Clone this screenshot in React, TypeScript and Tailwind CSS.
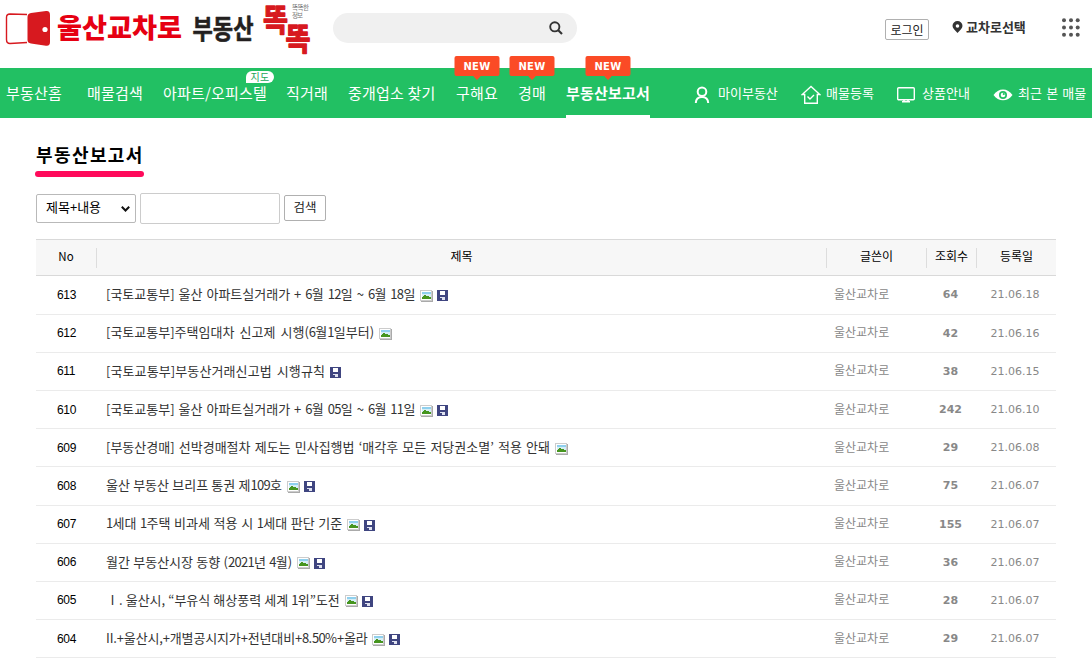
import clsx from "clsx";

const navLinks = [
  { title: "부동산홈", className: "w-[81px]" },
  { title: "매물검색", className: "w-[76px]" },
  { title: "아파트/오피스텔", className: "w-[123px]", badge: "map" },
  { title: "직거래", className: "w-[62px]" },
  { title: "중개업소 찾기", className: "w-[108px]" },
  { title: "구해요", className: "w-[62px]", badge: "new" },
  { title: "경매", className: "w-[48px]", badge: "new" },
  { title: "부동산보고서", className: "w-[84px]", badge: "new", active: true },
];

const posts = [
  { no: 613, title: "[국토교통부] 울산 아파트실거래가 + 6월 12일 ~ 6월 18일", image: true, file: true, hits: 64, date: "21.06.18", spacing: "w-[309px] [word-spacing:1.050px]" },
  { no: 612, title: "[국토교통부]주택임대차 신고제 시행(6월1일부터)", image: true, file: false, hits: 42, date: "21.06.16", spacing: "w-[268px] [word-spacing:2.200px]" },
  { no: 611, title: "[국토교통부]부동산거래신고법 시행규칙", image: false, file: true, hits: 38, date: "21.06.15", spacing: "w-[219px] tracking-[0.1px] [word-spacing:2px]" },
  { no: 610, title: "[국토교통부] 울산 아파트실거래가 + 6월 05일 ~ 6월 11일", image: true, file: true, hits: 242, date: "21.06.10", spacing: "w-[309px] [word-spacing:1.050px]" },
  { no: 609, title: "[부동산경매] 선박경매절차 제도는 민사집행법 ‘매각후 모든 저당권소멸’ 적용 안돼", image: true, file: false, hits: 29, date: "21.06.08", spacing: "w-[444px] [word-spacing:1.250px]" },
  { no: 608, title: "울산 부동산 브리프 통권 제109호", image: true, file: true, hits: 75, date: "21.06.07", spacing: "w-[176px] [word-spacing:0.300px]" },
  { no: 607, title: "1세대 1주택 비과세 적용 시 1세대 판단 기준", image: true, file: true, hits: 155, date: "21.06.07", spacing: "w-[236px] [word-spacing:0.700px]" },
  { no: 606, title: "월간 부동산시장 동향 (2021년 4월)", image: true, file: true, hits: 36, date: "21.06.07", spacing: "w-[186px] [word-spacing:0.400px]" },
  { no: 605, title: "Ⅰ. 울산시, “부유식 해상풍력 세계 1위”도전", image: true, file: true, hits: 28, date: "21.06.07", spacing: "w-[234px] [word-spacing:0.150px]" },
  { no: 604, title: "II.+울산시,+개별공시지가+전년대비+8.50%+올라", image: true, file: true, hits: 29, date: "21.06.07", spacing: "w-[261px] tracking-[-0.150px]" },
];

const Logo = () => (
  <svg
    width="320"
    height="60"
    viewBox="0 0 320 60"
    className="shrink-0 overflow-visible font-['Noto_Sans_CJK_KR',sans-serif]"
  >
    <path d="M27 14.500 L10 14 Q6.500 14 6.500 17.500 V39.500 Q6.500 43.500 10 43.500 L27 42.500" fill="#fff" stroke="#d7191f" strokeWidth="1.400" />
    <path d="M31 13 L46 11 Q50 10.500 50 15 V42 Q50 46.300 46 45.700 L31 43.500 Q27.500 43 27.500 40 V17 Q27.500 13.500 31 13Z" fill="#d7191f" />
    <circle cx="45" cy="29.500" r="2.600" fill="#fff" />
    <text x="57" y="37.500" fontSize="27" fontWeight="900" fill="#e60012" textLength="125" lengthAdjust="spacingAndGlyphs">울산교차로</text>
    <text x="192.500" y="38.800" fontSize="27" fontWeight="700" fill="#231f20" stroke="#231f20" strokeWidth=".6" strokeLinejoin="round" textLength="61" lengthAdjust="spacingAndGlyphs">부동산</text>
    <g fontSize="31" fontWeight="700" fill="#d7191f" stroke="#d7191f" strokeWidth="1.400" strokeLinejoin="round">
      <text x="263" y="30.500" textLength="25" lengthAdjust="spacingAndGlyphs">똑</text>
      <text x="285.500" y="49.500" textLength="25" lengthAdjust="spacingAndGlyphs">똑</text>
    </g>
    <text x="292" y="10" fontSize="6.500" fill="#777" textLength="17">똑똑한</text>
    <text x="292" y="18" fontSize="6.500" fill="#777" textLength="11">정보</text>
  </svg>
);

const SearchIcon = () => (
  <svg width="14" height="14" viewBox="0 0 14 14" fill="none" stroke="#333">
    <circle cx="5.800" cy="5.800" r="4.600" strokeWidth="1.900" />
    <path d="M9 9 L13 13" strokeWidth="2.200" />
  </svg>
);

const PinIcon = () => (
  <svg width="11" height="12" viewBox="0 0 11 12">
    <path fillRule="evenodd" fill="#333" d="M5.500 0 A5 5 0 0 1 10.500 5 C10.500 7.500 7.500 9.500 5.500 12 C3.500 9.500 .5 7.500 .5 5 A5 5 0 0 1 5.500 0Z M5.500 3.200 A1.800 1.800 0 1 0 5.500 6.800 A1.800 1.800 0 1 0 5.500 3.200Z" />
  </svg>
);

const GridIcon = () => (
  <svg width="18" height="20" viewBox="0 0 18 20" fill="#555">
    {[2.2, 9.5, 16.8].map((y) =>
      [2, 9, 15.7].map((x) => <circle key={`${x}-${y}`} cx={x} cy={y} r="2" />)
    )}
  </svg>
);

const UserIcon = () => (
  <svg width="16" height="18" viewBox="0 0 16 18" fill="none" stroke="#fff" strokeWidth="2">
    <circle cx="8" cy="5.800" r="4.300" />
    <path d="M1.800 17 C2 12.800 4 11 8 11 C12 11 14 12.800 14.200 17" />
  </svg>
);

const HouseIcon = () => (
  <svg width="20" height="20" viewBox="0 0 20 20" fill="none" stroke="#fff" strokeWidth="1.400">
    <path d="M3.700 9.500 H1.200 L10 1.500 L18.800 9.500 H16.300 V18.300 H3.700Z" />
    <path d="M6.500 11.500 L9 14 L13 10" />
  </svg>
);

const MonitorIcon = () => (
  <svg width="18" height="16" viewBox="0 0 18 16" fill="none" stroke="#fff" strokeWidth="1.400">
    <rect x=".7" y=".7" width="16.600" height="12" rx="1" />
    <path d="M5 14.800 H13 M7 12.700 V15 M11 12.700 V15" strokeWidth="1.600" />
  </svg>
);

const EyeIcon = () => (
  <svg width="20" height="12" viewBox="0 0 20 12">
    <path d="M0.500 6 C5 -1.500 15 -1.500 19.500 6 C15 13 5 13 .5 6Z" fill="#fff" />
    <circle cx="10" cy="6" r="4" fill="#22c063" />
    <circle cx="10" cy="6" r="2.300" fill="#fff" />
    <circle cx="10.800" cy="5" r="1.100" fill="#22c063" />
  </svg>
);

const ImageIcon = () => (
  <svg width="13" height="12" viewBox="0 0 13 12" className="block">
    <rect x="1" y="1" width="12" height="11" fill="#aaa" />
    <rect width="12" height="11" fill="#ccc" />
    <rect x="1" y="1" width="10" height="9" fill="#fff" />
    <rect x="2" y="2" width="9" height="7" fill="#8fd0ee" />
    <rect x="2" y="4" width="9" height="3" fill="#d5eef6" />
    <path d="M2 9 V7 H3 V6 H4 V5 H6 V6 H9 V7 H11 V9Z" fill="#46951f" />
  </svg>
);

const DiskIcon = () => (
  <svg width="11" height="11" viewBox="0 0 11 11" className="block">
    <rect width="11" height="11" fill="#3f4580" />
    <rect x="3" y="1" width="5" height="4" fill="#fff" />
    <rect x="3" y="7" width="5" height="3" fill="#dfe2f0" />
    <rect x="3" y="8" width="2" height="2" fill="#3f4580" />
  </svg>
);

const NewBadge = () => (
  <span className="absolute -top-3 left-1/2 flex h-5 w-[45px] -translate-x-1/2 items-center justify-center rounded-xs bg-[#fb4b26] font-['DejaVu_Sans',sans-serif] text-[10px] font-bold tracking-[0.3px] text-white">
    NEW
    <span className="absolute top-[18px] size-[5px] rotate-45 bg-[#fb4b26]" />
  </span>
);

const menus = [
  { title: "마이부동산", icon: <UserIcon />, className: "w-[107px]", box: "w-[24px]" },
  { title: "매물등록", icon: <HouseIcon />, className: "w-[96px]", box: "w-[25px]" },
  { title: "상품안내", icon: <MonitorIcon />, className: "w-[96px]", box: "w-[25px]" },
  { title: "최근 본 매물", icon: <EyeIcon />, className: "w-[99px] [word-spacing:1.300px]", box: "w-[25px]" },
];

// digits are set tighter than the hangul around them
const PostTitle = ({ title, className }: { title: string; className: string }) => (
  <span className={clsx("pb-0.5", className)}>
    {title.split(/(\d+)/).map((part, i) =>
      i % 2 ? (
        <span key={i} className="tracking-[-0.700px]">{part}</span>
      ) : (
        part
      )
    )}
  </span>
);

const Header = () => (
  <header>
    <div className="flex h-[68px] items-start">
      <Logo />
      <div className="mt-[13px] ml-[13px] flex h-[30px] w-[244px] items-center justify-end rounded-full bg-[#f0f0f0] pr-[14px]">
        <SearchIcon />
      </div>
      <button className="mt-[19px] ml-[308px] h-[21px] w-[44px] rounded-xs border border-[#b0b0b0] text-[12px] leading-[17px] text-[#222]">
        로그인
      </button>
      <div className="mt-[17px] ml-[23px] flex h-5 items-center gap-1 text-[13px] font-bold text-[#333]">
        <PinIcon />
        <span className="-ml-px w-[61px] whitespace-nowrap">교차로선택</span>
      </div>
      <div className="mt-[18px] ml-[35px]">
        <GridIcon />
      </div>
    </div>
    <nav className="flex h-[50px] bg-[#22c063] pl-[6px] text-white">
      <ul className="flex text-[15px] tracking-[0.2px]">
        {navLinks.map(({ title, className, badge, active }) => (
          <li key={title} className={clsx("h-full", className)}>
            <div className="relative h-full w-fit whitespace-nowrap">
              <span className={clsx("block h-full leading-[50px]", active && "font-bold")}>{title}</span>
              {active && <span className="absolute bottom-0 left-0 h-[3px] w-full bg-white" />}
              {badge === "new" && <NewBadge />}
              {badge === "map" && (
                <span className="absolute top-[3px] left-[83px] h-3 w-7 rounded-full rounded-bl-none bg-white text-center text-[10px] leading-[11px] text-[#22a85a]">
                  지도
                </span>
              )}
            </div>
          </li>
        ))}
      </ul>
      <ul className="ml-[44px] flex text-[13px]">
        {menus.map(({ title, icon, className, box }) => (
          <li key={title} className={clsx("flex h-full shrink-0 items-center whitespace-nowrap", className)}>
            <span className={clsx("mt-[3px] shrink-0", box)}>{icon}</span>
            {title}
          </li>
        ))}
      </ul>
    </nav>
  </header>
);

const App = () => {
  return (
    <div className="h-[659px] w-[1092px] overflow-hidden bg-white font-['Noto_Sans_CJK_KR',sans-serif]">
      <Header />
      <main className="w-[1056px] pt-[25px] pl-9">
        <h1 className="relative h-[34px] w-[108px] text-[18px] leading-[22px] font-bold tracking-[1.400px] whitespace-nowrap text-black">
          부동산보고서
          <span className="absolute bottom-0 -left-px h-[6px] w-[109px] rounded-full bg-[#ff0a5b]" />
        </h1>
        <form className="mt-4 flex h-[31px] items-start">
          <div className="mt-px flex h-[29px] w-[100px] items-center justify-between rounded-xs border border-[#b9b9b9] pr-[5px] pl-[9px] text-[13px] text-black">
            <span className="pb-1">제목+내용</span>
            <svg width="9" height="6" viewBox="0 0 9 6" fill="none" stroke="#111" strokeWidth="2">
              <path d="M.8 .8 L4.500 4.500 L8.200 .8" />
            </svg>
          </div>
          <input className="ml-1 h-[31px] w-[140px] rounded-xs border border-[#ccc]" />
          <button className="mt-[2px] ml-1 h-[26px] w-[42px] rounded-xs border border-[#b0b0b0] pb-0.5 text-[12.500px] text-[#222]">
            검색
          </button>
        </form>
        <div className="mt-[15px]">
          <div className="flex h-[37.400px] items-center border-y border-[#d9d9d9] bg-[#f7f7f7] text-center text-[12px] leading-4 text-black">
            <span className="w-[60px] pb-1 text-[11.500px]">No</span>
            <span className="w-[730px] border-l border-[#ddd] pb-1">제목</span>
            <span className="w-[100px] border-l border-[#ddd] pb-1">글쓴이</span>
            <span className="w-[50px] border-l border-[#ddd] pb-1">조회수</span>
            <span className="w-20 border-l border-[#ddd] pb-1">등록일</span>
          </div>
          {posts.map((post) => (
            <div key={post.no} className="flex h-[38.200px] items-center border-b border-[#ebebeb] text-[12px] whitespace-nowrap">
              <span className="w-[70px] pl-[21px] font-['Liberation_Sans',sans-serif] tracking-[-0.3px] text-black">{post.no}</span>
              <div className="flex w-[728px] items-center text-[13px] text-[#333]">
                <PostTitle title={post.title} className={post.spacing} />
                {post.image && <span className="mt-0.5 ml-[5px]"><ImageIcon /></span>}
                {post.file && <span className={clsx("mt-0.5", post.image ? "ml-1" : "ml-[5px]")}><DiskIcon /></span>}
              </div>
              <span className="w-[92px] pb-[2px] text-[12px] text-[#888]">울산교차로</span>
              <span className="w-[49px] pt-[1.500px] text-center font-['DejaVu_Sans',sans-serif] text-[11px] font-bold text-[#888]">{post.hits}</span>
              <span className="w-20 pt-[1.500px] text-center font-['DejaVu_Sans',sans-serif] text-[11px] text-[#888]">{post.date}</span>
            </div>
          ))}
        </div>
      </main>
    </div>
  );
};

export default App;
